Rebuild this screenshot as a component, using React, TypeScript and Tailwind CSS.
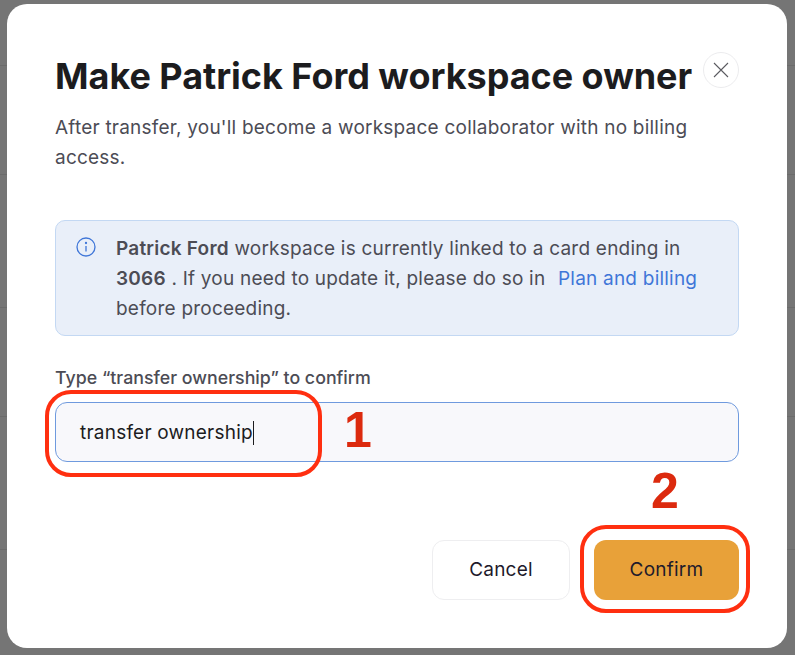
import React from 'react';

const Divider: React.FC<{ height: string }> = ({ height }) => (
  <div className={`${height} shrink-0 border-b border-[#6b6b6b]`} />
);

export default function App() {
  return (
    <div className="relative h-[655px] w-[795px] overflow-hidden bg-[#757575] font-['Inter',sans-serif]">
      {/* page behind the overlay */}
      <div className="absolute inset-0 flex flex-col">
        <Divider height="h-[66px]" />
        <Divider height="h-[109px]" />
        <Divider height="h-[133px]" />
        <Divider height="h-[109px]" />
        <Divider height="h-[133px]" />
      </div>

      <div className="relative ml-[7px] mt-[4px] h-[644px] w-[780px] rounded-[20px] bg-white pl-[48px] pr-[48px] pt-[48px]">
        <div className="flex items-start justify-between">
          <h1 className="whitespace-nowrap text-[36px] font-bold leading-[48px] tracking-[-0.03px] text-[#1c1c1e]">
            Make Patrick Ford workspace owner
          </h1>
          <button className="flex h-[36px] w-[36px] shrink-0 items-center justify-center rounded-full border border-[#ececee] bg-white text-[#5a5a60]">
            <svg width="16" height="16" viewBox="0 0 16 16" fill="none" stroke="currentColor" strokeWidth="1.1">
              <path d="M1 1l14 14M15 1L1 15" />
            </svg>
          </button>
        </div>

        <p className="mt-[13px] w-[640px] text-[19px] leading-[30px] tracking-[0.22px] text-[#4c4c55]">
          After transfer, you'll become a workspace collaborator with no billing access.
        </p>

        <div className="mt-[47px] flex h-[116px] rounded-[10px] border border-[#c3d8f3] bg-[#e9eff9] pl-[20px] pt-[13px]">
          <svg className="mt-[3px] shrink-0 text-[#3f76d8]" width="20" height="20" viewBox="0 0 20 20" fill="none" stroke="currentColor" strokeWidth="1.3">
            <circle cx="10" cy="10" r="9" />
            <path d="M10 9v5.5" />
            <circle cx="10" cy="6" r="0.5" fill="currentColor" />
          </svg>
          <p className="ml-[20px] w-[590px] text-[19px] leading-[30px] tracking-[0.22px] text-[#4c4c55]">
            <strong className="font-semibold">Patrick Ford</strong> workspace is currently linked to a card ending in{' '}
            <strong className="font-semibold">3066</strong> . If you need to update it, please do so in{' '}
            <a className="ml-[7px] text-[#3f76d8]">Plan and billing</a> before proceeding.
          </p>
        </div>

        <label className="mt-[30px] block text-[17.8px] font-medium leading-[24px] text-[#4c4c55]">
          Type “transfer ownership” to confirm
        </label>
        <div className="mt-[12px] flex h-[60px] items-center rounded-[12px] border border-[#6f9ade] bg-[#f8f8fb] pl-[24px] pt-[2px] text-[19px] tracking-[0.22px] text-[#1c1c1e]">
          <span>transfer ownership</span>
          <span className="h-[24px] w-px bg-[#1c1c1e]" />
        </div>

        <div className="mt-[78px] flex justify-end gap-[24px]">
          <button className="h-[60px] w-[138px] rounded-[12px] border border-[#eeeef0] bg-white text-[19px] font-normal tracking-[0.22px] text-[#1e1a2b]">
            Cancel
          </button>
          <button className="h-[60px] w-[145px] rounded-[12px] bg-[#e8a139] text-[19px] font-normal tracking-[0.22px] text-[#1e1a2b]">
            Confirm
          </button>
        </div>

        {/* red annotations drawn on top of the screenshot */}
        <div className="absolute left-[38px] top-[386px] h-[87px] w-[277px] rounded-[26px] border-[4px] border-[#ff2f10]" />
        <div className="absolute left-[573px] top-[521px] h-[88px] w-[170px] rounded-[26px] border-[4px] border-[#ff2f10]" />
        <span className="absolute left-[337px] top-[398px] font-['Liberation_Sans',sans-serif] text-[50px] font-bold leading-[56px] text-[#dc2a0e]">
          1
        </span>
        <span className="absolute left-[644px] top-[459px] font-['Liberation_Sans',sans-serif] text-[50px] font-bold leading-[56px] text-[#dc2a0e]">
          2
        </span>
      </div>
    </div>
  );
}
